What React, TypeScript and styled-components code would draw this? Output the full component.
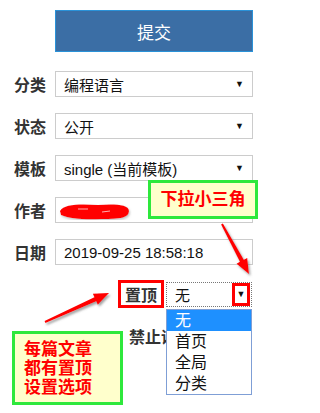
import styled, { createGlobalStyle } from "styled-components";

const GlobalStyle = createGlobalStyle`
  html, body {
    margin: 0;
    padding: 0;
    background: #ffffff;
  }
  * {
    box-sizing: border-box;
  }
`;

const FONT = `"Liberation Sans", "Noto Sans CJK SC", sans-serif`;

// Main page, the annotation layer sits above it
const Page = styled.div`
  position: relative;
  width: 267px;
  height: 413px;
  overflow: hidden;
  background: #ffffff;
  font-family: ${FONT};
  color: #333333;
`;

const Form = styled.div`
  display: flex;
  flex-direction: column;
  padding: 10px 0 0 14px;
`;

const SubmitButton = styled.button`
  margin-left: 41px;
  width: 198px;
  height: 42px;
  background: #3b6ea5;
  border: 1px solid #2a92d8;
  color: #ffffff;
  font-family: ${FONT};
  font-size: 17px;
  padding: 0;
`;

const Row = styled.div<{ $top?: number; $indent?: number }>`
  display: flex;
  align-items: center;
  height: 26px;
  margin-top: ${(p) => p.$top ?? 16}px;
  padding-left: ${(p) => p.$indent ?? 0}px;
`;

const Label = styled.span<{ $width?: number }>`
  width: ${(p) => p.$width ?? 41}px;
  flex-shrink: 0;
  overflow: hidden;
  font-size: 16px;
  font-weight: bold;
  color: #333333;
  white-space: nowrap;
`;

// red annotation frame around the 置顶 label
const MarkedLabel = styled.span`
  display: flex;
  align-items: center;
  justify-content: center;
  width: 46px;
  height: 28px;
  border: 3px solid #ff0000;
  font-size: 16px;
  font-weight: bold;
  color: #333333;
`;

const Field = styled.div<{ $width?: number; $dotted?: boolean }>`
  position: relative;
  display: flex;
  align-items: center;
  justify-content: space-between;
  width: ${(p) => p.$width ?? 198}px;
  height: 26px;
  padding: 0 8px 0 8px;
  border: 1px ${(p) => (p.$dotted ? "dotted #777777" : "solid #cccccc")};
  background: #ffffff;
  font-size: 15px;
  color: #111111;
  white-space: nowrap;
`;

const Caret = styled.span<{ $marked?: boolean }>`
  display: flex;
  align-items: center;
  justify-content: center;
  font-size: 9px;
  color: #111111;
  ${(p) =>
    p.$marked
      ? `
    width: 18px;
    height: 23px;
    margin-right: -7px;
    border: 3px solid #ff0000;
  `
      : `
    margin-right: 0;
  `}
`;

const TopField = styled(Field)`
  margin-left: 2px;
  height: 25px;
`;

const DropList = styled.ul`
  position: absolute;
  top: 26px;
  left: -1px;
  width: 86px;
  margin: 0;
  padding: 0;
  list-style: none;
  border: 1px solid #7f9fd6;
  background: #ffffff;
  z-index: 2;
`;

const DropItem = styled.li<{ $active?: boolean }>`
  height: 21px;
  line-height: 21px;
  padding-left: 8px;
  font-size: 16px;
  color: ${(p) => (p.$active ? "#ffffff" : "#111111")};
  background: ${(p) => (p.$active ? "#1e90ff" : "transparent")};
`;

// yellow callout notes with a green frame
const Note = styled.div<{ $x: number; $y: number; $w: number; $h: number }>`
  position: absolute;
  left: ${(p) => p.$x}px;
  top: ${(p) => p.$y}px;
  width: ${(p) => p.$w}px;
  height: ${(p) => p.$h}px;
  border: 3px solid #2ee83c;
  background: #ffffcc;
  color: #ff0000;
  font-size: 17px;
  font-weight: bold;
  line-height: 19px;
  z-index: 3;
`;

const NoteCenter = styled(Note)`
  display: flex;
  align-items: center;
  justify-content: center;
`;

const NoteLines = styled(Note)`
  display: flex;
  flex-direction: column;
  justify-content: center;
  padding-left: 9px;
  padding-top: 1px;
`;

const Overlay = styled.svg`
  position: absolute;
  left: 0;
  top: 0;
  width: 267px;
  height: 413px;
  z-index: 4;
  pointer-events: none;
`;

const Scribble = styled.svg`
  margin-left: -6px;
  flex-shrink: 0;
`;

const arrowPoints = (
  x1: number,
  y1: number,
  x2: number,
  y2: number
): string => {
  const dx = x2 - x1;
  const dy = y2 - y1;
  const len = Math.sqrt(dx * dx + dy * dy);
  const ux = dx / len;
  const uy = dy / len;
  const nx = -uy;
  const ny = ux;
  const headLen = 15;
  const bx = x2 - ux * headLen;
  const by = y2 - uy * headLen;
  const pts: [number, number][] = [
    [x1 + nx * 1, y1 + ny * 1],
    [bx + nx * 2.2, by + ny * 2.2],
    [bx + nx * 6, by + ny * 6],
    [x2, y2],
    [bx - nx * 6, by - ny * 6],
    [bx - nx * 2.2, by - ny * 2.2],
    [x1 - nx * 1, y1 - ny * 1],
  ];
  return pts.map((p) => `${p[0].toFixed(1)},${p[1].toFixed(1)}`).join(" ");
};

const selectRows = [
  { label: "分类", value: "编程语言" },
  { label: "状态", value: "公开" },
  { label: "模板", value: "single (当前模板)" },
];

const App = (): JSX.Element => {
  return (
    <>
      <GlobalStyle />
      <Page>
        <Form>
          <SubmitButton>提交</SubmitButton>

          {selectRows.map((row, i) => (
            <Row key={row.label} $top={i === 0 ? 19 : 16}>
              <Label>{row.label}</Label>
              <Field>
                <span>{row.value}</span>
                <Caret>▼</Caret>
              </Field>
            </Row>
          ))}

          <Row>
            <Label>作者</Label>
            <Field>
              <Scribble width="74" height="20" viewBox="0 0 74 20">
                <defs>
                  <filter id="soft" x="-10%" y="-30%" width="120%" height="160%">
                    <feGaussianBlur stdDeviation="0.6" />
                    <feDropShadow dx="1" dy="1.5" stdDeviation="1" floodColor="#999" floodOpacity="0.6" />
                  </filter>
                </defs>
                <path
                  d="M2,11 C6,4 22,4 40,5 C55,4 71,4 71,11 C71,18 62,19 44,19 C28,20 12,19 3,15 Z"
                  fill="#ff0000"
                  filter="url(#soft)"
                />
                <path d="M20,9 L30,9 M44,12 L52,11" stroke="#ffb0b0" strokeWidth="1" />
              </Scribble>
            </Field>
          </Row>

          <Row>
            <Label>日期</Label>
            <Field>
              <span>2019-09-25 18:58:18</span>
            </Field>
          </Row>

          <Row $top={16} $indent={104}>
            <MarkedLabel>置顶</MarkedLabel>
            <TopField $width={86} $dotted>
              <span>无</span>
              <Caret $marked>▼</Caret>
              <DropList>
                <DropItem $active>无</DropItem>
                <DropItem>首页</DropItem>
                <DropItem>全局</DropItem>
                <DropItem>分类</DropItem>
              </DropList>
            </TopField>
          </Row>

          {/* the open list covers the rest of this label */}
          <Row $top={16} $indent={115}>
            <Label $width={37}>禁止评论</Label>
          </Row>
        </Form>

        <NoteCenter $x={148} $y={180} $w={110} $h={39}>
          下拉小三角
        </NoteCenter>
        <NoteLines $x={12} $y={331} $w={111} $h={74}>
          <span>每篇文章</span>
          <span>都有置顶</span>
          <span>设置选项</span>
        </NoteLines>

        <Overlay viewBox="0 0 267 413">
          <defs>
            <filter id="shadow" x="-20%" y="-20%" width="140%" height="140%">
              <feDropShadow dx="1.5" dy="2" stdDeviation="1" floodColor="#666" floodOpacity="0.6" />
            </filter>
          </defs>
          <polygon points={arrowPoints(222, 224, 249, 274)} fill="#ff0000" filter="url(#shadow)" />
          <polygon points={arrowPoints(45, 322, 109, 293)} fill="#ff0000" filter="url(#shadow)" />
        </Overlay>
      </Page>
    </>
  );
};

export default App;
